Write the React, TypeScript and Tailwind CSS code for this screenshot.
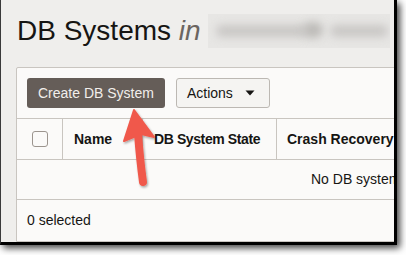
import React from "react";

export default function App() {
  const font = { fontFamily: '"Liberation Sans", Arial, sans-serif' };
  return (
    <div className="w-[406px] h-[255px] bg-white relative overflow-hidden" style={font}>
      <div className="w-[397px] h-[245px] border-l border-l-[#3a3a3a] border-r-[3px] border-b-[3px] border-black shadow-[3px_3px_7px_rgba(0,0,0,0.75)] overflow-hidden bg-[#efeeec] relative">
        {/* Title */}
        <div className="h-[67px] pt-[14px] pl-[16px] flex items-start">
          <div className="text-[28px] leading-[34px] text-[#161513] whitespace-nowrap">
            DB Systems <span className="italic text-[#6b6561]">in</span>
          </div>
          <div className="ml-[7px] w-[182px] h-[34px] bg-[#e7e6e4] relative overflow-hidden">
            <div className="absolute left-[8px] top-[11px] w-[92px] h-[12px] bg-[#c9c7c5] rounded-full blur-[4px]" />
            <div className="absolute left-[95px] top-[8px] w-[20px] h-[16px] bg-[#bdbbb8] rounded-full blur-[4px]" />
            <div className="absolute left-[122px] top-[11px] w-[58px] h-[12px] bg-[#c9c7c5] rounded-full blur-[4px]" />
          </div>
        </div>

        {/* Panel */}
        <div className="ml-[15px] w-[420px] h-[175px] border border-[#c9c5c0] bg-[#fbfaf9] rounded-tl-[2px] flex flex-col">
          <div className="h-[50px] pt-[10px] pl-[10px] flex gap-[11px] items-start">
            <div className="h-[30px] px-[11px] rounded-[3px] bg-[#655d58] text-[#f1eeeb] text-[14px] flex items-center whitespace-nowrap">
              Create DB System
            </div>
            <div className="h-[30px] pl-[10px] pr-[14px] rounded-[3px] bg-[#f5f4f2] border border-[#bcb8b3] text-[#161513] text-[14px] flex items-center whitespace-nowrap">
              Actions
              <svg width="10" height="6" viewBox="0 0 10 6" className="ml-[12px]">
                <path d="M0.5 0.5 L9.5 0.5 L5 5.5 Z" fill="#161513" />
              </svg>
            </div>
          </div>
          <div className="h-[42px] border-t border-b border-[#c9c5c0] flex text-[14px] font-bold text-[#161513] whitespace-nowrap">
            <div className="w-[46px] border-r border-[#c9c5c0] flex items-center justify-center">
              <div className="w-[16px] h-[16px] rounded-[3px] border border-[#9c958f] bg-[#fbfaf9] ml-[1px]" />
            </div>
            <div className="w-[80px] border-r border-[#c9c5c0] flex items-center pl-[11px]">Name</div>
            <div className="w-[134px] border-r border-[#c9c5c0] flex items-center pl-[11px] tracking-[-0.4px]">DB System State</div>
            <div className="flex-1 flex items-center pl-[10px]">Crash Recovery</div>
          </div>
          <div className="h-[40px] border-b border-[#c9c5c0] flex items-center pl-[294px] text-[14px] text-[#161513] whitespace-nowrap">
            No DB systems
          </div>
          <div className="flex-1 flex items-center pl-[10px] text-[14px] text-[#161513]">0 selected</div>
        </div>

        {/* Arrow */}
        <svg className="absolute left-0 top-0" width="397" height="245" viewBox="0 0 397 245">
          <defs>
            <filter id="sh" x="-50%" y="-50%" width="200%" height="200%">
              <feDropShadow dx="1" dy="1.5" stdDeviation="1.2" floodColor="#000" floodOpacity="0.35" />
            </filter>
          </defs>
          <g filter="url(#sh)">
            <path d="M137 134 Q139 160 142 182" stroke="#f0594c" strokeWidth="8" strokeLinecap="round" fill="none" />
            <path d="M133 110 L153 137 L140 134 L123 141 Z" fill="#f0594c" strokeLinejoin="round" stroke="#f0594c" strokeWidth="2" />
          </g>
        </svg>
      </div>
    </div>
  );
}
